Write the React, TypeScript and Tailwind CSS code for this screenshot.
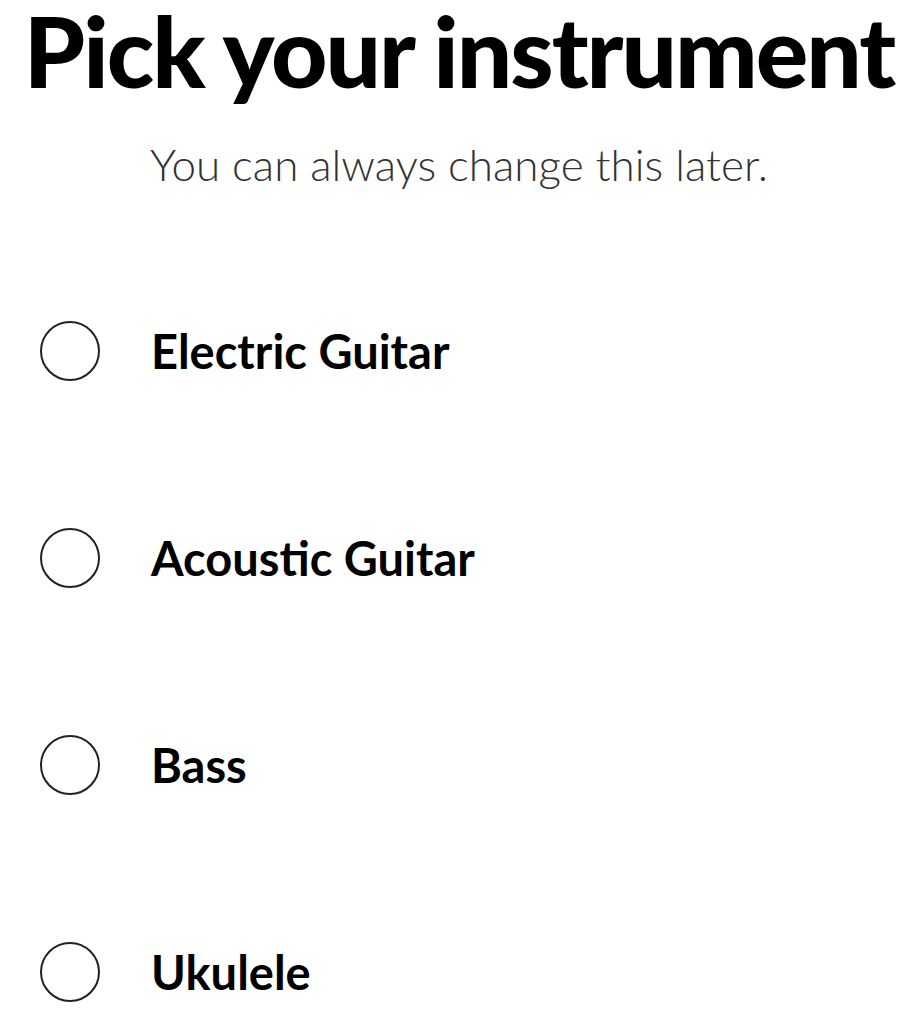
const INSTRUMENTS = ["Electric Guitar", "Acoustic Guitar", "Bass", "Ukulele"]

export default function App() {
  return (
    <div className="min-h-[1024px] w-[918px] bg-white font-['Lato',sans-serif] text-black">
      <h1 className="whitespace-nowrap text-center text-[98px] font-black leading-[100px] tracking-[-2px]">
        Pick your instrument
      </h1>
      <p className="mt-[38px] text-center text-[44px] font-light leading-[52px] text-[#333]">
        You can always change this later.
      </p>
      <ul className="mt-[131px] flex flex-col gap-[147px] pl-[40px]">
        {INSTRUMENTS.map((name) => (
          <li key={name} className="flex h-[60px] items-center">
            <span className="size-[60px] shrink-0 rounded-full border-2 border-[#222]" />
            <span className="ml-[51px] text-[47px] font-bold leading-none">{name}</span>
          </li>
        ))}
      </ul>
    </div>
  )
}
